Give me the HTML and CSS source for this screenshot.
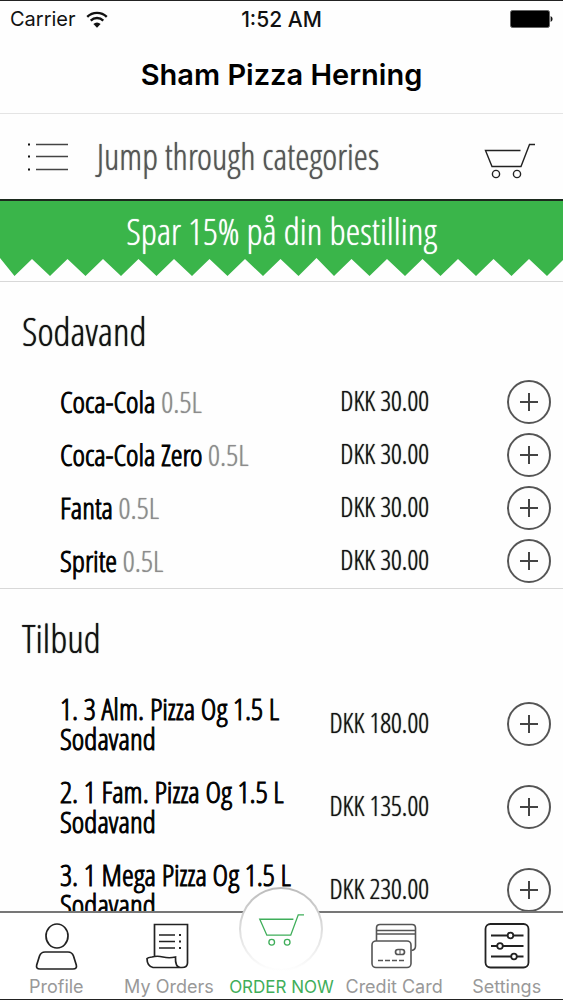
FILE: index.html
```html
<!DOCTYPE html>
<html lang="da">
<head>
  <meta charset="UTF-8" />
  <meta name="viewport" content="width=device-width, initial-scale=1.0"/>
  <title>Sham Pizza Herning</title>
  <link rel="stylesheet" href="styles.css">
</head>
<body>
  <!-- Status bar -->
  <div class="status-bar">
    <div class="carrier">
      <span>Carrier</span>
      <svg class="wifi" viewBox="0 0 20 16" width="22" height="17" aria-hidden="true">
        <path d="M0.8 5.6 A13 13 0 0 1 19.2 5.6" fill="none" stroke="#111" stroke-width="2.2"/>
        <path d="M4.1 9 A8.4 8.4 0 0 1 15.9 9" fill="none" stroke="#111" stroke-width="2.2"/>
        <path d="M10 15.8 L6.6 12.3 A4.8 4.8 0 0 1 13.4 12.3 Z" fill="#111"/>
      </svg>
    </div>
    <span class="time">1:52 AM</span>
    <svg class="battery" viewBox="0 0 43 18" width="43" height="18" aria-hidden="true">
      <rect x="0.5" y="0.5" width="39" height="17" rx="2" fill="#000" stroke="#666"/>
      <path d="M40.6 6 Q42.6 7 42.6 9 Q42.6 11 40.6 12 Z" fill="#111"/>
    </svg>
  </div>

  <header class="title-bar">
    <h1>Sham Pizza Herning</h1>
  </header>

  <!-- Category jump -->
  <div class="jump-bar">
    <button class="jump-button">
      <svg viewBox="0 0 42 28" width="42" height="28" aria-hidden="true">
        <g stroke="#444" stroke-width="1.3">
          <path d="M9 1.5H41M9 13.5H41M9 26.5H41"/>
          <path d="M1 1.5H3M1 13.5H3M1 26.5H3" stroke="#111" stroke-width="2"/>
        </g>
      </svg>
      <span>Jump through categories</span>
    </button>
    <button class="cart-button" aria-label="Cart">
      <svg viewBox="0 0 52 38" width="52" height="38" aria-hidden="true">
        <g fill="none" stroke="#222" stroke-width="1.4">
          <path d="M36.5 8.5H1.5L8 24.5H37L45.5 2.5H51"/>
          <circle cx="12" cy="32" r="3.6"/>
          <circle cx="33" cy="32" r="3.6"/>
        </g>
      </svg>
    </button>
  </div>

  <main class="menu">
    <!-- Offer banner -->
    <div class="banner">
      <p>Spar 15% på din bestilling</p>
      <svg class="zigzag" viewBox="0 0 563 18" preserveAspectRatio="none" aria-hidden="true">
        <path fill="#3ab54a" d="M0 0H563V2L547 18L529 1L511.5 18L493.5 1L476 18L458 1L440.5 18L422.5 1L405 18L387 1L369.5 18L351.5 1L334 18L316.5 0L298.5 18L280.5 1L263 18L245 1L227.5 18L209.5 1L192 18L174 1L156.5 18L138.5 1L121 18L103 1L85.5 18L67.5 1L50 18L32 1L14.5 18L0 0Z"/>
      </svg>
    </div>

    <section class="category">
      <h2>Sodavand</h2>
      <ul>
        <li>
          <span class="name"><b>Coca-Cola</b> 0.5L</span>
          <span class="price">DKK 30.00</span>
          <button class="add" aria-label="Add Coca-Cola"></button>
        </li>
        <li>
          <span class="name"><b>Coca-Cola Zero</b> 0.5L</span>
          <span class="price">DKK 30.00</span>
          <button class="add" aria-label="Add Coca-Cola Zero"></button>
        </li>
        <li>
          <span class="name"><b>Fanta</b> 0.5L</span>
          <span class="price">DKK 30.00</span>
          <button class="add" aria-label="Add Fanta"></button>
        </li>
        <li>
          <span class="name"><b>Sprite</b> 0.5L</span>
          <span class="price">DKK 30.00</span>
          <button class="add" aria-label="Add Sprite"></button>
        </li>
      </ul>
    </section>

    <section class="category">
      <h2>Tilbud</h2>
      <ul>
        <li>
          <span class="name"><b>1. 3 Alm. Pizza Og 1.5 L Sodavand</b></span>
          <span class="price">DKK 180.00</span>
          <button class="add" aria-label="Add offer 1"></button>
        </li>
        <li>
          <span class="name"><b>2. 1 Fam. Pizza Og 1.5 L Sodavand</b></span>
          <span class="price">DKK 135.00</span>
          <button class="add" aria-label="Add offer 2"></button>
        </li>
        <li>
          <span class="name"><b>3. 1 Mega Pizza Og 1.5 L Sodavand</b></span>
          <span class="price">DKK 230.00</span>
          <button class="add" aria-label="Add offer 3"></button>
        </li>
      </ul>
    </section>
  </main>

  <!-- Tab bar -->
  <nav class="tab-bar">
    <a href="#profile">
      <svg viewBox="0 0 46 48" width="46" height="48" aria-hidden="true">
        <g fill="none" stroke="#222" stroke-width="1.7">
          <ellipse cx="24" cy="13" rx="11" ry="12"/>
          <path d="M12 29H35Q39 29 40.5 33L43.3 42Q44.3 46 40 46H7Q2.7 46 3.7 42L6.5 33Q8 29 12 29Z"/>
        </g>
      </svg>
      <span>Profile</span>
    </a>
    <a href="#orders">
      <svg viewBox="0 0 46 48" width="46" height="48" aria-hidden="true">
        <g fill="none" stroke="#222" stroke-width="1.7">
          <path d="M8.5 33V1.5H41.5V40Q41.5 44.5 36 44.5H7Q1 43 1 35.5Q2 34.5 6 34Q11 32.500 17 34Q23 35.5 29.5 34Q29 44.5 34.5 44.5"/>
          <path d="M13 12H29M13 18.5H29M13 25H29"/>
          <path d="M33 12H35M33 18.5H35M33 25H35" stroke-width="2"/>
        </g>
      </svg>
      <span>My Orders</span>
    </a>
    <a href="#order" class="active">
      <span class="bubble">
        <svg viewBox="0 0 52 38" width="46" height="34" aria-hidden="true">
          <g fill="none" stroke="#3fae5a" stroke-width="1.5">
            <path d="M40 8H2L10 26H37L45.5 3H52"/>
            <circle cx="15.5" cy="34" r="3.2"/>
            <circle cx="33" cy="34" r="3.2"/>
          </g>
        </svg>
      </span>
      <span>ORDER NOW</span>
    </a>
    <a href="#card">
      <svg viewBox="0 0 46 48" width="46" height="48" aria-hidden="true">
        <g fill="none" stroke="#555" stroke-width="1.6">
          <path d="M5.5 18V5Q5.5 1.5 9 1.5H41Q44.5 1.5 44.5 5V23Q44.5 27 40.5 27.5"/>
          <path d="M5.5 7.5H44.5M5.5 11H44.5"/>
          <rect x="1" y="18" width="39" height="26.5" rx="4"/>
          <rect x="24.5" y="26.5" width="9" height="5" rx="2.5" stroke-width="1.7"/>
          <path d="M29 26.5V31.5" stroke-width="1"/>
          <path d="M7 37.5H34" stroke-dasharray="5 2"/>
        </g>
      </svg>
      <span>Credit Card</span>
    </a>
    <a href="#settings">
      <svg viewBox="0 0 46 48" width="46" height="48" aria-hidden="true">
        <g fill="#fff" stroke="#222" stroke-width="1.8">
          <rect x="1.5" y="1" width="43" height="43.5" rx="5"/>
          <path d="M7 12.5H39.5M7 23H39.5M7 33.5H39.5"/>
          <circle cx="26.5" cy="12.5" r="2.8"/>
          <circle cx="16" cy="23" r="2.8"/>
          <circle cx="30" cy="33.5" r="2.8"/>
        </g>
      </svg>
      <span>Settings</span>
    </a>
  </nav>
</body>
</html>
```
FILE: styles.css
```css
* {
  box-sizing: border-box;
}

body {
  margin: 0;
  height: 100vh;
  display: flex;
  flex-direction: column;
  background: #fefefe;
  color: #111;
  font-family: 'Inter', sans-serif;
  border-top: 1px solid #222;
  border-bottom: 1px solid #222;
}

button {
  padding: 0;
  border: none;
  background: none;
  color: inherit;
  font-family: inherit;
  cursor: pointer;
}

svg {
  display: block;
}

.status-bar {
  display: grid;
  grid-template-columns: 1fr auto 1fr;
  align-items: center;
  height: 36px;
  padding: 0 10px;
}

.carrier {
  display: flex;
  align-items: center;
  gap: 10px;
  font-size: 20px;
}

.time {
  font-size: 21px;
  font-weight: 500;
}

.battery {
  justify-self: end;
}

.title-bar {
  height: 77px;
  border-bottom: 1px solid #e4e4e4;
}

h1 {
  margin: 0;
  padding-top: 18px;
  font-size: 29px;
  line-height: 40px;
  font-weight: 600;
  text-align: center;
  color: #000;
}

/* Condensed face for everything on the menu, the shadow gives it some weight */
.jump-bar,
.menu {
  font-family: 'Open Sans Condensed Light', 'Open Sans Condensed', sans-serif;
  text-shadow: 0 0 1px currentColor;
}

.jump-bar {
  display: flex;
  align-items: center;
  justify-content: space-between;
  height: 87px;
  padding: 0 27px;
  border-bottom: 2px solid #1c2a1e;
}

.jump-button {
  display: flex;
  align-items: center;
  gap: 28px;
  font-size: 36px;
  color: #555;
  text-shadow: inherit;
}

.cart-button {
  padding-top: 8px;
}

.menu {
  flex: 1;
  min-height: 0;
  overflow: hidden auto;
  scrollbar-width: none;
}

.banner {
  padding-bottom: 5px;
}

.banner p {
  margin: 0;
  padding-top: 3px;
  background: #3ab54a;
  color: #fff;
  font-size: 37px;
  line-height: 54px;
  text-align: center;
}

.zigzag {
  width: 100%;
  height: 18px;
}

.category {
  border-top: 1px solid #d8d8d8;
}

h2 {
  margin: 0;
  padding: 28px 22px 24px;
  font-size: 39px;
  line-height: 42px;
  font-weight: 400;
}

ul {
  margin: 0;
  padding: 0;
  list-style: none;
}

li {
  display: grid;
  grid-template-columns: 1fr auto 44px;
  align-items: center;
  padding: 4px 12px 5px 60px;
}

.name {
  max-width: 250px;
  padding: 7px 0;
  font-size: 30px;
  line-height: 30px;
  color: #8c8c8c;
}

.name b {
  font-weight: 400;
  color: #000;
  text-shadow: none;
  -webkit-text-stroke: 1px #000;
}

.price {
  margin-right: 78px;
  padding-bottom: 2px;
  font-size: 27px;
  line-height: 30px;
  white-space: nowrap;
}

.add {
  width: 44px;
  height: 44px;
  border: 2px solid #555;
  border-radius: 50%;
  background:
    linear-gradient(#444, #444) center / 18px 2px no-repeat,
    linear-gradient(#444, #444) center / 2px 18px no-repeat;
}

.tab-bar {
  display: grid;
  grid-template-columns: repeat(5, 1fr);
  height: 88px;
  border-top: 2px solid #777;
  background: #fff;
}

.tab-bar a {
  position: relative;
  display: flex;
  flex-direction: column;
  align-items: center;
  justify-content: flex-end;
  gap: 4px;
  font-size: 18px;
  line-height: 24px;
  white-space: nowrap;
  color: #999;
  text-decoration: none;
}

.tab-bar .active {
  font-size: 17px;
  color: #3fae5a;
}

/* Raised round button over the edge of the bar */
.bubble {
  position: absolute;
  top: -26px;
  left: calc(50% - 42px);
  display: flex;
  align-items: center;
  justify-content: center;
  width: 84px;
  height: 84px;
  border-radius: 50%;
  background: linear-gradient(#fff, #fff) padding-box, linear-gradient(#bbb, #fff) border-box;
  border: 2px solid transparent;
}
```
